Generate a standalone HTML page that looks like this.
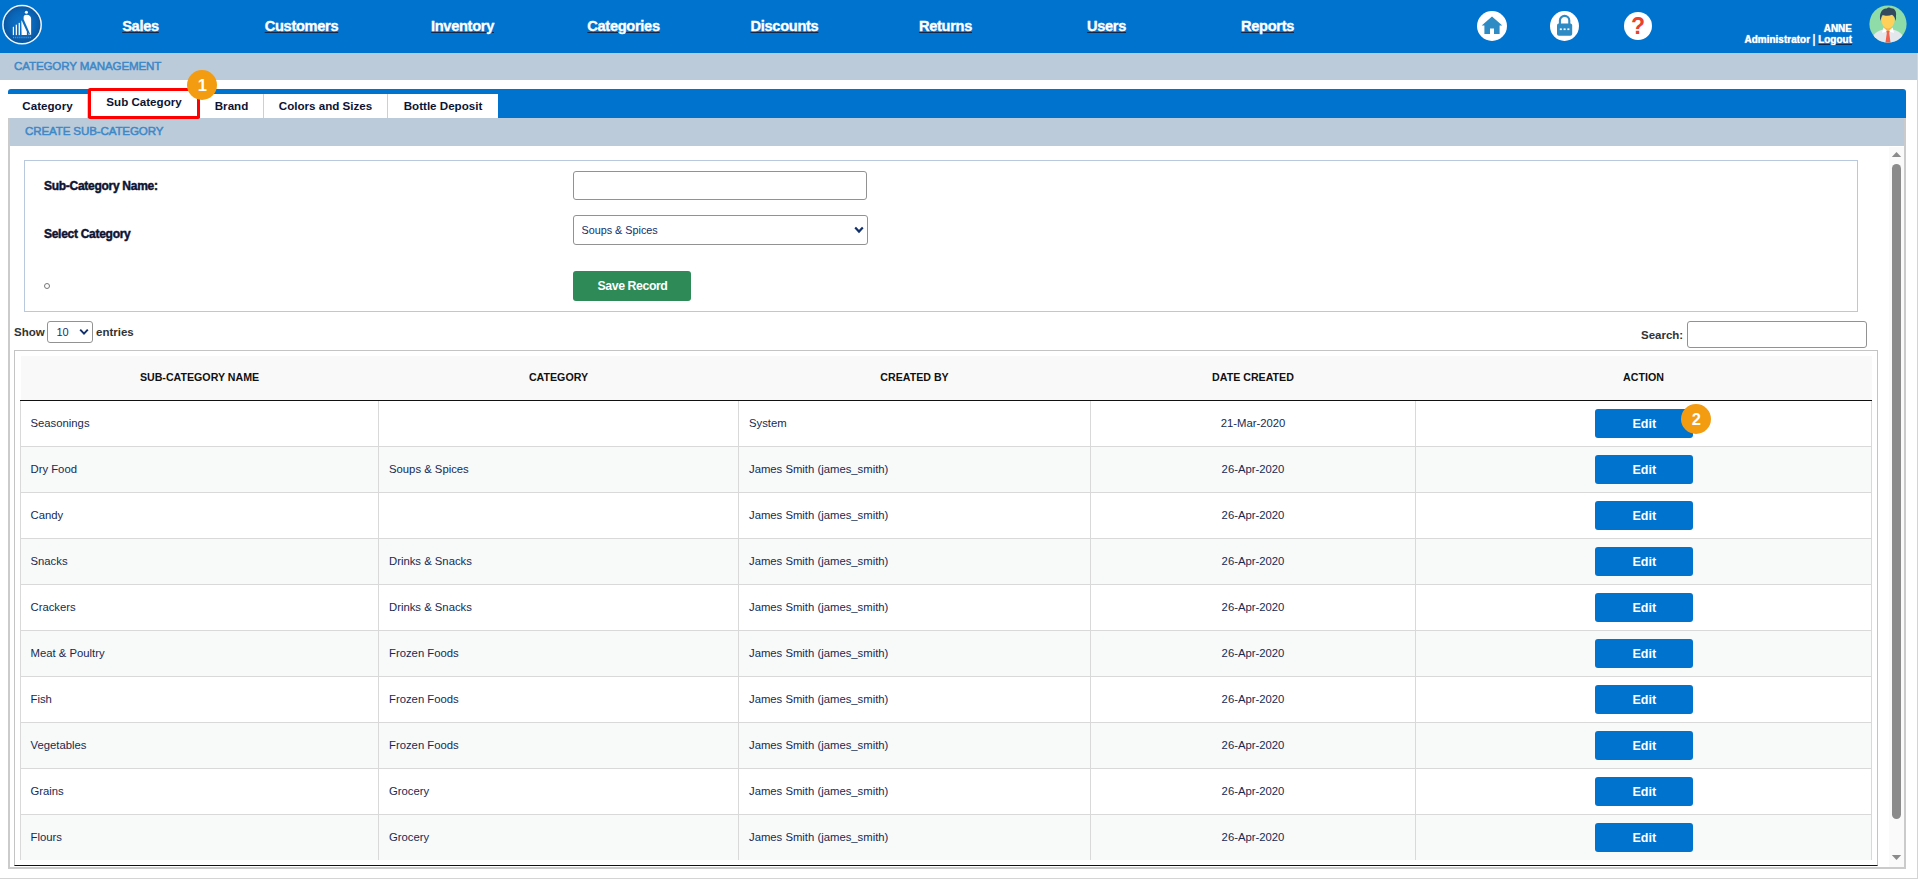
<!DOCTYPE html>
<html lang="en">
<head>
<meta charset="utf-8">
<title>Category Management</title>
<style>
*{box-sizing:border-box;margin:0;padding:0}
html,body{width:1918px;height:885px;overflow:hidden;background:#fff}
body{font-family:"Liberation Sans",sans-serif;position:relative;color:#1a2340}
.abs{position:absolute}
/* header */
#hdr{position:absolute;left:0;top:0;width:1918px;height:53px;background:#0073cf}
.nav{position:absolute;top:0;height:53px;width:161px;text-align:center;line-height:53px;font-weight:bold;font-size:14.6px;color:#fff;text-decoration:underline;text-decoration-color:#12264a;text-decoration-thickness:1px;text-underline-offset:1px;-webkit-text-stroke:0.35px #fff;letter-spacing:-0.3px}
.circ{position:absolute;border-radius:50%;background:#fff}
#user{position:absolute;right:66px;top:23px;text-align:right;color:#fff;font-weight:bold;font-size:10px;line-height:11px;text-shadow:0 0 1px #fff}
#user u{text-decoration-color:#0a2a55}
/* page frame */
#frame{position:absolute;left:0;top:53px;width:1918px;height:826px;border-right:1px solid #d4d4d4;border-bottom:1px solid #d4d4d4}
#title{position:absolute;left:0;top:53px;width:1917px;height:27px;background:#bbcbda;color:#3d88c8;font-size:11.6px;line-height:26px;padding-left:14px;letter-spacing:-0.15px;-webkit-text-stroke:0.5px #3d88c8}
/* tabs */
#tabbar{position:absolute;left:8px;top:89px;width:1898px;height:29px;background:#0073cf;border-radius:3px 3px 0 0}
.tab{position:absolute;top:94px;height:24px;background:#fff;font-weight:bold;font-size:11.6px;line-height:23px;text-align:center;color:#0d1333;border-right:1px solid #cfcfcf}
#redbox{position:absolute;left:88px;top:88px;width:112px;height:31px;border:3px solid #f00;border-radius:2px;background:#fff;z-index:5;font-weight:bold;font-size:11.6px;line-height:21px;text-align:center;color:#0d1333}
.badge{position:absolute;z-index:6;width:30px;height:30px;border-radius:50%;background:#f39c12;color:#fff;font-weight:bold;font-size:16.5px;line-height:30px;text-align:center;padding-left:0.5px}
#sub{position:absolute;left:10px;top:118px;width:1894px;height:28px;background:#bbcbda;color:#3d88c8;font-size:11.6px;line-height:26px;padding-left:15px;letter-spacing:-0.15px;-webkit-text-stroke:0.5px #3d88c8}
/* content */
#content{position:absolute;left:8px;top:118px;width:1898px;height:751px;border:2px solid #cbcbcb;border-top:none;background:#fff}
#formbox{position:absolute;left:24px;top:160px;width:1834px;height:152px;border:1px solid #b9c8dc}
.lbl{position:absolute;left:44px;font-weight:bold;font-size:12px;line-height:14px;color:#0d1333;letter-spacing:-0.28px;-webkit-text-stroke:0.45px #0d1333}
.inp{position:absolute;border:1px solid #929292;border-radius:3px;background:#fff}
#save{position:absolute;left:573px;top:271px;width:118px;height:30px;background:#2e8b57;border-radius:3px;color:#fff;font-weight:bold;font-size:12.3px;line-height:31px;text-align:center;padding-left:1px;letter-spacing:-0.42px}
/* datatable */
.ctl{position:absolute;font-weight:bold;font-size:11.5px;color:#333}
#tblwrap{position:absolute;left:14px;top:350px;width:1864px;height:516px;border:1px solid #c4c4c4;border-bottom:1px solid #111}
table{position:absolute;left:20px;top:356px;width:1851px;border-collapse:collapse;table-layout:fixed;font-size:11.3px;color:#172a52}
th{height:44px;background:#f9f9f9;font-size:10.65px;font-weight:bold;color:#111;text-align:center;border-bottom:1px solid #111;vertical-align:middle;padding-bottom:1px}
tbody tr:first-child td{border-top:none}
tbody tr:last-child td{border-bottom:none}
td{height:46px;border:1px solid #d9d9d9;padding:0 10px 0 10px;vertical-align:middle}
tr td:first-child{border-left:1px solid #d9d9d9;padding-left:9.5px}
tr:nth-child(even) td{background:#f8f9f9}
td.c{text-align:center}
.edit{display:inline-block;margin-left:1.5px;width:98px;height:29px;background:#0073cf;color:#fff;font-weight:bold;font-size:12.5px;line-height:30px;border-radius:3px;text-align:center;vertical-align:middle}
/* scrollbar */
#sb{position:absolute;left:1889px;top:147px;width:15px;height:720px;background:#fafafa}
#thumb{position:absolute;left:1892px;top:164px;width:9px;height:655px;border-radius:5px;background:#8b8b8b}
</style>
</head>
<body>
<div id="hdr">
<svg class="abs" style="left:0;top:0" width="46" height="53" viewBox="0 0 46 53">
<defs><radialGradient id="lg" cx="50%" cy="48%" r="52%"><stop offset="0" stop-color="#0f74c8"/><stop offset="0.6" stop-color="#0a66b8"/><stop offset="1" stop-color="#09539c"/></radialGradient></defs>
<circle cx="22.05" cy="24.7" r="19.15" fill="url(#lg)" stroke="#f1f6fb" stroke-width="1.5"/>
<circle cx="26.4" cy="12.3" r="1.55" fill="#fff"/>
<path d="M23.6 18.2 C23.4 15.6 24.6 14.8 26.4 14.7 C29.6 14.7 31.1 16.6 31.1 19 L31.1 35.1 L30.5 35.1 L23.7 19.4 Z" fill="#fff"/>
<path d="M21.3 20.2 L22 21.2 L26.9 31.8 L26.9 35.1 L21.6 35.1 Z" fill="#fff"/>
<path d="M28.6 32.4 L29.8 35.1 L28.6 35.1 Z" fill="#fff"/>
<rect x="12.8" y="26.8" width="1.2" height="8.3" fill="#fff"/><rect x="15.7" y="24.7" width="1.3" height="10.4" fill="#f4f8fc"/><rect x="18.6" y="22.9" width="1.4" height="12.2" fill="#e6f0f9"/>
<line x1="13" y1="37.5" x2="31.1" y2="37.5" stroke="#4a94d6" stroke-width="1.7" stroke-dasharray="1.1 1"/>
</svg>
<div class="nav" style="left:60px">Sales</div>
<div class="nav" style="left:221px">Customers</div>
<div class="nav" style="left:382px">Inventory</div>
<div class="nav" style="left:543px">Categories</div>
<div class="nav" style="left:704px">Discounts</div>
<div class="nav" style="left:865px">Returns</div>
<div class="nav" style="left:1026px">Users</div>
<div class="nav" style="left:1187px">Reports</div>
<div class="circ" style="left:1477px;top:11px;width:30px;height:30px"></div>
<svg class="abs" style="left:1477px;top:11px" width="30" height="30" viewBox="0 0 30 30"><path d="M15 5.6 L25.3 14.6 L22.6 14.6 L22.6 23 L17 23 L17 17.4 L13 17.4 L13 23 L7.4 23 L7.4 14.6 L4.7 14.6 Z" fill="#2e8bc4"/></svg>
<div class="circ" style="left:1550px;top:11px;width:29px;height:30px"></div>
<svg class="abs" style="left:1550px;top:11px" width="29" height="30" viewBox="0 0 29 30"><path d="M9.9 13.5 V9.6 a4.7 4.7 0 0 1 9.4 0 V13.5" fill="none" stroke="#2e8bc4" stroke-width="2.1"/><rect x="7" y="12.6" width="15.2" height="12.2" rx="1.8" fill="#2e8bc4"/><rect x="9.8" y="17.4" width="2" height="1.7" fill="#fff"/><rect x="13.6" y="17.4" width="2" height="1.7" fill="#fff"/><rect x="17.4" y="17.4" width="2" height="1.7" fill="#fff"/></svg>
<div class="circ" style="left:1624px;top:12px;width:28px;height:28px;color:#e8412c;font-weight:bold;font-size:23px;line-height:29px;text-align:center">?</div>
<div id="user">ANNE<br>Administrator <span style="font-size:13.5px;font-weight:normal;line-height:0;position:relative;top:-0.5px;margin:0 -0.5px">|</span> <u>Logout</u></div>
<svg class="abs" style="left:1868.5px;top:5.2px" width="38" height="38" viewBox="0 0 38 38">
<defs><clipPath id="av"><circle cx="19" cy="19" r="18.6"/></clipPath></defs>
<circle cx="19" cy="19" r="18.6" fill="#8fdca8"/>
<g clip-path="url(#av)">
<path d="M2 38 C3 28.4 9 25.8 14.6 24.6 L23.4 24.6 C29 25.8 35 28.4 36 38 Z" fill="#e4e7ec"/>
<path d="M15.2 19.6 H22.8 V25.6 L19 28 L15.2 25.6 Z" fill="#f6b94a"/>
<path d="M14.4 22.6 L19 26.6 L23.6 22.6 L25 27.8 L19 26.6 L13 27.8 Z" fill="#fff"/>
<path d="M17.2 25.8 H20.8 L20.2 28 L21.6 38 H16.4 L17.8 28 Z" fill="#f0604d"/>
<ellipse cx="19" cy="15.6" rx="6.6" ry="7.8" fill="#ffd05a"/>
<path d="M11.4 16 C9.6 8 13.4 3 17.6 3.6 C18.4 2.2 21 2 22 3.2 C25 2.6 28 6 27 11 C27.2 13 27 15 26.6 16 C26 12.6 25 10.8 23 9.8 C20 11.2 15.4 10.8 13.6 10 C12.4 11.6 12 13.6 11.4 16 Z" fill="#34495e"/>
</g>
</svg>
</div>
<div id="frame"></div>
<div id="title">CATEGORY MANAGEMENT</div>
<div id="tabbar"></div>
<div class="tab" style="left:8px;width:80px">Category</div>
<div class="tab" style="left:200px;width:64px">Brand</div>
<div class="tab" style="left:264px;width:124px">Colors and Sizes</div>
<div class="tab" style="left:388px;width:110px;border-right:none">Bottle Deposit</div>
<div id="redbox">Sub Category</div>
<div class="badge" style="left:187px;top:70px">1</div>
<div id="content"></div>
<div id="sub">CREATE SUB-CATEGORY</div>
<div id="formbox"></div>
<div class="lbl" style="top:179px">Sub-Category Name:</div>
<div class="lbl" style="top:227px">Select Category</div>
<div class="abs" style="left:44px;top:283px;width:6px;height:6px;border:1px solid #777;border-radius:50%"></div>
<div class="inp" style="left:573px;top:171px;width:294px;height:29px"></div>
<div class="inp" style="left:573px;top:215px;width:295px;height:30px;font-size:10.8px;line-height:28px;padding-left:7.5px;color:#12306b">Soups &amp; Spices
<svg class="abs" style="right:3px;top:10px" width="10" height="8" viewBox="0 0 10 8"><path d="M1.2 1.6 L5 5.6 L8.8 1.6" fill="none" stroke="#12306b" stroke-width="2.2"/></svg></div>
<div id="save">Save Record</div>
<div class="ctl" style="left:14px;top:326px">Show</div>
<div class="inp" style="left:47px;top:321px;width:46px;height:22px;font-size:11px;line-height:20px;padding-left:8.5px;color:#12306b">10
<svg class="abs" style="right:3px;top:6px" width="10" height="8" viewBox="0 0 10 8"><path d="M1.2 1.6 L5 5.6 L8.8 1.6" fill="none" stroke="#12306b" stroke-width="1.9"/></svg></div>
<div class="ctl" style="left:96px;top:326px">entries</div>
<div class="ctl" style="left:1641px;top:329px;font-size:11.5px">Search:</div>
<div class="inp" style="left:1687px;top:321px;width:180px;height:27px"></div>
<div id="tblwrap"></div>
<table>
<colgroup><col style="width:358px"><col style="width:360px"><col style="width:352px"><col style="width:325px"><col style="width:456px"></colgroup>
<thead><tr><th>SUB-CATEGORY NAME</th><th>CATEGORY</th><th>CREATED BY</th><th>DATE CREATED</th><th>ACTION</th></tr></thead>
<tbody>
<tr><td>Seasonings</td><td></td><td>System</td><td class="c">21-Mar-2020</td><td class="c"><span class="edit">Edit</span></td></tr>
<tr><td>Dry Food</td><td>Soups &amp; Spices</td><td>James Smith (james_smith)</td><td class="c">26-Apr-2020</td><td class="c"><span class="edit">Edit</span></td></tr>
<tr><td>Candy</td><td></td><td>James Smith (james_smith)</td><td class="c">26-Apr-2020</td><td class="c"><span class="edit">Edit</span></td></tr>
<tr><td>Snacks</td><td>Drinks &amp; Snacks</td><td>James Smith (james_smith)</td><td class="c">26-Apr-2020</td><td class="c"><span class="edit">Edit</span></td></tr>
<tr><td>Crackers</td><td>Drinks &amp; Snacks</td><td>James Smith (james_smith)</td><td class="c">26-Apr-2020</td><td class="c"><span class="edit">Edit</span></td></tr>
<tr><td>Meat &amp; Poultry</td><td>Frozen Foods</td><td>James Smith (james_smith)</td><td class="c">26-Apr-2020</td><td class="c"><span class="edit">Edit</span></td></tr>
<tr><td>Fish</td><td>Frozen Foods</td><td>James Smith (james_smith)</td><td class="c">26-Apr-2020</td><td class="c"><span class="edit">Edit</span></td></tr>
<tr><td>Vegetables</td><td>Frozen Foods</td><td>James Smith (james_smith)</td><td class="c">26-Apr-2020</td><td class="c"><span class="edit">Edit</span></td></tr>
<tr><td>Grains</td><td>Grocery</td><td>James Smith (james_smith)</td><td class="c">26-Apr-2020</td><td class="c"><span class="edit">Edit</span></td></tr>
<tr><td>Flours</td><td>Grocery</td><td>James Smith (james_smith)</td><td class="c">26-Apr-2020</td><td class="c"><span class="edit">Edit</span></td></tr>
</tbody>
</table>
<div class="badge" style="left:1681px;top:404px">2</div>
<div id="sb"></div>
<div id="thumb"></div>
<svg class="abs" style="left:1891px;top:151px" width="11" height="7" viewBox="0 0 11 7"><path d="M0.8 6 L5.5 0.9 L10.2 6 Z" fill="#8b8b8b"/></svg>
<svg class="abs" style="left:1891px;top:854px" width="11" height="7" viewBox="0 0 11 7"><path d="M0.8 1 L10.2 1 L5.5 6.1 Z" fill="#8b8b8b"/></svg>
</body>
</html>
